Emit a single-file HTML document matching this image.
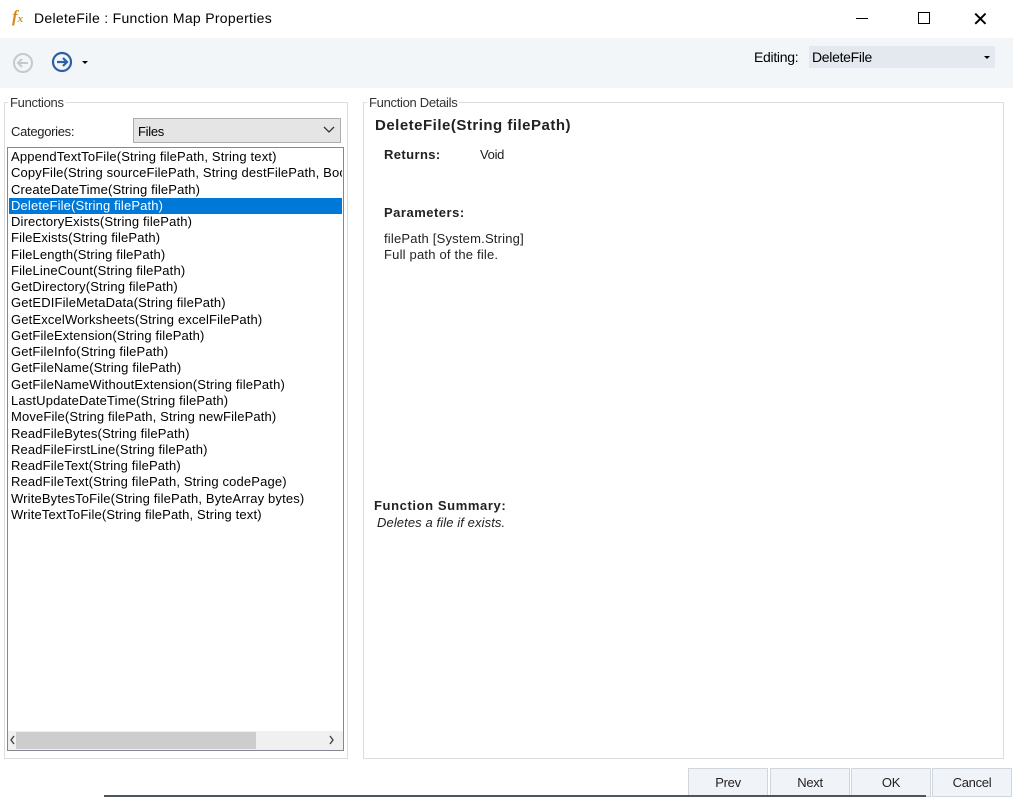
<!DOCTYPE html>
<html><head><style>
body{margin:0;width:1013px;height:797px;position:relative;background:#fff;font-family:"Liberation Sans",sans-serif;overflow:hidden;color:#000}
.a{position:absolute}
.t{font-size:12px;letter-spacing:-0.3px;white-space:nowrap}
.list{font-size:13px !important;letter-spacing:0.15px !important}
.list div{height:16.27px;line-height:16px;padding-left:3px}
.btn{position:absolute;top:768px;height:29px;width:80px;background:#f0f4f8;border:1px solid #cfd6de;box-sizing:border-box;font-size:13px;letter-spacing:-0.3px;text-align:center;line-height:27px;color:#222}
</style></head><body>
<div class="a" style="left:0;top:0;width:1013px;height:38px;background:#fff"></div>
<div class="a" style="left:12px;top:7px;font:italic bold 17px 'Liberation Serif',serif;color:#d98a1c">f<span style="font-size:11px">x</span></div>
<div class="a" style="left:34px;top:10px;font-size:14px;letter-spacing:0.3px;color:#000">DeleteFile : Function Map Properties</div>
<div class="a" style="left:856px;top:18px;width:12px;height:1px;background:#000"></div>
<div class="a" style="left:918px;top:12px;width:10px;height:10px;border:1px solid #000"></div>
<div class="a" style="left:972px;top:7px;font-size:20px;font-weight:300">✕</div>
<div class="a" style="left:0;top:38px;width:1013px;height:50px;background:#f3f6f9"></div>
<svg class="a" style="left:12px;top:52px" width="22" height="22"><circle cx="11" cy="11" r="9" fill="none" stroke="#c5c9cd" stroke-width="2"/><path d="M16 11H7M10 7L6 11L10 15" fill="none" stroke="#c5c9cd" stroke-width="2"/></svg>
<svg class="a" style="left:51px;top:51px" width="22" height="22"><circle cx="11" cy="11" r="9" fill="none" stroke="#2d5fa8" stroke-width="2.2"/><path d="M6 11H15M12 7L16 11L12 15" fill="none" stroke="#2d5fa8" stroke-width="2.2"/></svg>
<div class="a" style="left:82px;top:61px;border:3px solid transparent;border-top:3px solid #000"></div>
<div class="a" style="left:754px;top:49px;font-size:14px;letter-spacing:-0.3px">Editing:</div>
<div class="a" style="left:809px;top:46px;width:186px;height:22px;background:#e3e9ef"></div>
<div class="a" style="left:812px;top:49px;font-size:14px;letter-spacing:-0.3px">DeleteFile</div>
<div class="a" style="left:984px;top:56px;border:3px solid transparent;border-top:3px solid #000"></div>

<div class="a" style="left:4px;top:102px;width:342px;height:655px;border:1px solid #dcdcdc"></div>
<div class="a t" style="left:8px;top:95px;background:#fff;padding:0 2px;font-size:13px;color:#333">Functions</div>
<div class="a t" style="left:11px;top:124px;font-size:13px;color:#222">Categories:</div>
<div class="a" style="left:133px;top:118px;width:208px;height:25px;background:#e5e5e5;border:1px solid #adadad;box-sizing:border-box"></div>
<div class="a t" style="left:138px;top:124px;font-size:13px">Files</div>
<svg class="a" style="left:323px;top:126px" width="12" height="8"><path d="M1 1L6 6L11 1" fill="none" stroke="#333" stroke-width="1.3"/></svg>
<div class="a" style="left:7px;top:147px;width:337px;height:604px;border:1px solid #828790;box-sizing:border-box"></div>
<div class="a" style="left:9px;top:198px;width:333px;height:16px;background:#0078d7"></div>
<div class="a list t" style="left:8px;top:149px;width:334px;overflow:hidden">
<div>AppendTextToFile(String filePath, String text)</div>
<div>CopyFile(String sourceFilePath, String destFilePath, Boolean overwrite)</div>
<div>CreateDateTime(String filePath)</div>
<div style="color:#fff">DeleteFile(String filePath)</div>
<div>DirectoryExists(String filePath)</div>
<div>FileExists(String filePath)</div>
<div>FileLength(String filePath)</div>
<div>FileLineCount(String filePath)</div>
<div>GetDirectory(String filePath)</div>
<div>GetEDIFileMetaData(String filePath)</div>
<div>GetExcelWorksheets(String excelFilePath)</div>
<div>GetFileExtension(String filePath)</div>
<div>GetFileInfo(String filePath)</div>
<div>GetFileName(String filePath)</div>
<div>GetFileNameWithoutExtension(String filePath)</div>
<div>LastUpdateDateTime(String filePath)</div>
<div>MoveFile(String filePath, String newFilePath)</div>
<div>ReadFileBytes(String filePath)</div>
<div>ReadFileFirstLine(String filePath)</div>
<div>ReadFileText(String filePath)</div>
<div>ReadFileText(String filePath, String codePage)</div>
<div>WriteBytesToFile(String filePath, ByteArray bytes)</div>
<div>WriteTextToFile(String filePath, String text)</div>
</div>
<div class="a" style="left:8px;top:731px;width:335px;height:19px;background:#f0f0f0"></div>
<div class="a" style="left:16px;top:732px;width:240px;height:17px;background:#cdcdcd"></div>
<svg class="a" style="left:9px;top:735px" width="8" height="10"><path d="M5 1L2 5L5 9" fill="none" stroke="#444" stroke-width="1.4"/></svg>
<svg class="a" style="left:328px;top:735px" width="8" height="10"><path d="M2 1L5 5L2 9" fill="none" stroke="#444" stroke-width="1.4"/></svg>

<div class="a" style="left:363px;top:102px;width:639px;height:655px;border:1px solid #dcdcdc"></div>
<div class="a t" style="left:367px;top:95px;background:#fff;padding:0 2px;font-size:13px;color:#333">Function Details</div>
<div class="a t" style="left:375px;top:117px;font-size:15px;letter-spacing:0.5px;font-weight:bold;color:#222">DeleteFile(String filePath)</div>
<div class="a t" style="left:384px;top:147px;font-size:13px;letter-spacing:0.4px;font-weight:bold;color:#222">Returns:</div>
<div class="a t" style="left:480px;top:147px;font-size:13px;color:#222">Void</div>
<div class="a t" style="left:384px;top:205px;font-size:13px;letter-spacing:0.5px;font-weight:bold;color:#222">Parameters:</div>
<div class="a t" style="left:384px;top:231px;font-size:13px;letter-spacing:0.2px;color:#222">filePath [System.String]</div>
<div class="a t" style="left:384px;top:247px;font-size:13px;letter-spacing:0.2px;color:#222">Full path of the file.</div>
<div class="a t" style="left:374px;top:498px;font-size:13px;letter-spacing:0.6px;font-weight:bold;color:#222">Function Summary:</div>
<div class="a t" style="left:377px;top:515px;font-size:13px;letter-spacing:0.1px;font-style:italic;color:#222">Deletes a file if exists.</div>

<div class="btn" style="left:688px">Prev</div>
<div class="btn" style="left:770px">Next</div>
<div class="btn" style="left:851px">OK</div>
<div class="btn" style="left:932px">Cancel</div>
<div class="a" style="left:104px;top:795px;width:822px;height:2px;background:#4a5560"></div>
</body></html>
